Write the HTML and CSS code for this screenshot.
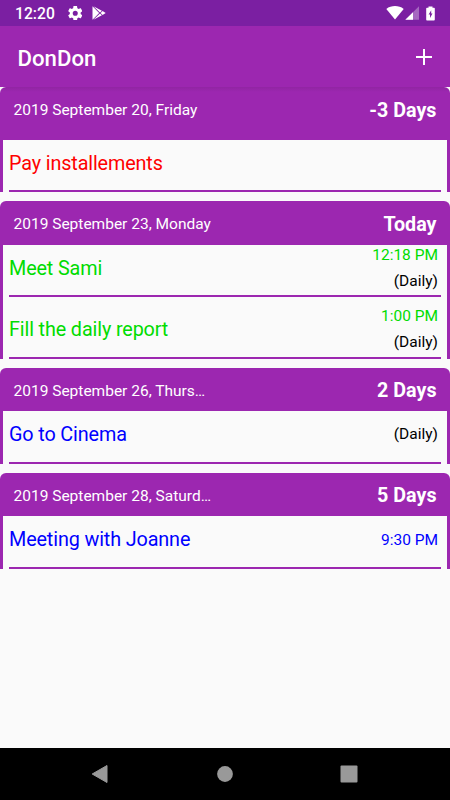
FILE: index.html
```html
<!DOCTYPE html>
<html lang="en">
<head>
<meta charset="utf-8">
<title>DonDon</title>
<link rel="stylesheet" href="styles.css">
</head>
<body>
<div class="screen">
  <div class="status">
    <span class="clock">12:20</span>
    <svg class="gear" width="14.500" height="14.500" viewBox="2 2 20 20"><path fill="#fff" d="M19.43 12.98c.04-.32.07-.64.07-.98s-.03-.66-.07-.98l2.11-1.65c.19-.15.24-.42.12-.64l-2-3.46c-.12-.22-.39-.3-.61-.22l-2.49 1c-.52-.4-1.08-.73-1.69-.98l-.38-2.65C14.46 2.18 14.25 2 14 2h-4c-.25 0-.46.18-.49.42l-.38 2.65c-.61.25-1.17.59-1.69.98l-2.49-1c-.23-.09-.49 0-.61.22l-2 3.46c-.13.22-.07.49.12.64l2.11 1.65c-.04.32-.07.65-.07.98s.03.66.07.98l-2.11 1.65c-.19.15-.24.42-.12.64l2 3.46c.12.22.39.3.61.22l2.49-1c.52.4 1.08.73 1.69.98l.38 2.65c.03.24.24.42.49.42h4c.25 0 .46-.18.49-.42l.38-2.65c.61-.25 1.17-.59 1.69-.98l2.49 1c.23.09.49 0 .61-.22l2-3.46c.12-.22.07-.49-.12-.64l-2.110-1.650zM12 15.500a3.500 3.500 0 1 1 0-7 3.500 3.500 0 0 1 0 7z"/></svg>
    <svg class="play" width="14" height="14" viewBox="0 0 14 14"><path fill="#fff" d="M.5.3 7.200 6.900.5 13.700z"/><path fill="#fff" d="M1.400.3 9.900 4.700 8 6.500zM1.400 13.700 9.900 9.300 8 7.500zM10.600 5.100 13.700 7 10.600 8.900 8.600 7z"/></svg>
    <span class="spacer"></span>
    <svg class="wifi" width="18" height="14" viewBox="0 0 18 14"><path fill="#fff" d="M.3 2.900C5.300-.9 12.700-.9 17.700 2.900L9 13.600z"/></svg>
    <svg class="signal" width="14" height="14" viewBox="0 0 14 14"><path fill="#fff" fill-opacity=".32" d="M14 .3V13.800H.3z"/><path fill="#fff" d="M8 6.200V13.800H.3z"/></svg>
    <svg class="battery" width="9" height="15" viewBox="0 0 9 15"><path fill="#fff" fill-rule="evenodd" d="M2.500.6h4v1.200H8q.8 0 .8.800v11q0 .9-.8.900H1q-.8 0-.8-.9v-11Q.2 1.800 1 1.800h1.500zM5.200 4.200 2.600 8.500H4v3.500l2.500-4.400H5.200z"/></svg>
  </div>
  <header class="appbar">
    <h1>DonDon</h1>
    <svg width="16" height="16" viewBox="0 0 16 16"><path stroke="#fff" stroke-width="2" d="M8 0v16M0 8h16"/></svg>
  </header>
  <main>
    <section class="card first">
      <div class="head"><span class="date">2019 September 20, Friday</span><span class="days">-3 Days</span></div>
      <div class="body">
        <div class="row red"><span class="task">Pay installements</span></div>
      </div>
    </section>
    <section class="card">
      <div class="head"><span class="date">2019 September 23, Monday</span><span class="days">Today</span></div>
      <div class="body">
        <div class="row green"><span class="task">Meet Sami</span><span class="info"><span>12:18 PM</span><span class="repeat">(Daily)</span></span></div>
        <div class="row green next"><span class="task">Fill the daily report</span><span class="info"><span>1:00 PM</span><span class="repeat">(Daily)</span></span></div>
      </div>
    </section>
    <section class="card">
      <div class="head"><span class="date">2019 September 26, Thurs…</span><span class="days">2 Days</span></div>
      <div class="body">
        <div class="row blue"><span class="task">Go to Cinema</span><span class="info"><span class="repeat">(Daily)</span></span></div>
      </div>
    </section>
    <section class="card">
      <div class="head"><span class="date">2019 September 28, Saturd…</span><span class="days">5 Days</span></div>
      <div class="body">
        <div class="row blue"><span class="task">Meeting with Joanne</span><span class="info time"><span>9:30 PM</span></span></div>
      </div>
    </section>
  </main>
  <nav>
    <svg width="18" height="20" viewBox="0 0 18 20"><path fill="#999" d="M1.200 10 16 1.500V18.500z" stroke="#999" stroke-linejoin="round"/></svg>
    <svg width="18" height="20" viewBox="0 0 18 20"><circle cx="9" cy="10" r="7.900" fill="#999"/></svg>
    <svg width="18" height="20" viewBox="0 0 18 20"><rect x=".5" y="1.500" width="17" height="17" rx="1" fill="#999"/></svg>
  </nav>
</div>
</body>
</html>
```
FILE: styles.css
```css
* { box-sizing: border-box; }
body { margin: 0; background: #fafafa; font-family: Roboto, sans-serif; }
.screen { width: 450px; height: 800px; display: flex; flex-direction: column; overflow: hidden; }
.status { height: 26px; flex: none; background: #7b1fa2; display: flex; align-items: center; padding: 0 15.5px 0 15px; color: #fff; }
.clock { font-size: 15.7px; font-weight: 500; width: 51.5px; line-height: 26px; padding-top: 2px; }
.gear { margin-left: 1px; }
.play { margin-left: 10px; }
.spacer { flex: 1; }
.signal { margin-left: 1px; }
.battery { margin-left: 7px; }
.appbar { height: 61px; flex: none; background: #9c27b0; display: flex; align-items: center; justify-content: space-between; padding: 0 18.5px 0 17.5px; }
.appbar h1 { margin: 0; padding-top: 2px; font-size: 22.2px; font-weight: 500; color: #fff; }
main { flex: 1; display: flex; flex-direction: column; gap: 9px; }
.card { border-radius: 6px 6px 0 0; background: #9c27b0; }
.head { height: 43.5px; display: flex; align-items: center; justify-content: space-between; padding: 3px 13.5px 0; color: #fff; }
.first .head { height: 52.5px; padding: 1px 13.5px 7px; }
.first { background: linear-gradient(#9125a3, #9c27b0 5px); }
.date { font-size: 15.5px; }
.days { font-size: 19.7px; font-weight: 700; }
.body { background: #fafafa; border: solid #9c27b0; border-width: 0 3px; padding: 0 6px; }
.row { height: 52.5px; border-bottom: 2px solid #9c27b0; display: flex; justify-content: space-between; align-items: center; padding-right: 3px; }
.next { height: 61.5px; padding-top: 9px; }
.task { font-size: 19.8px; letter-spacing: -.13px; padding-bottom: 3px; }
.info { display: flex; flex-direction: column; align-items: flex-end; font-size: 15.5px; line-height: 26px; padding-bottom: 4px; }
.time { padding-bottom: 2px; }
.repeat { color: #000; }
.red { color: #f00; }
.green { color: #00dc00; }
.blue { color: #00f; }
nav { height: 52.5px; flex: none; background: #000; display: flex; justify-content: space-between; align-items: center; padding: 0 92px 0 91px; }
```
